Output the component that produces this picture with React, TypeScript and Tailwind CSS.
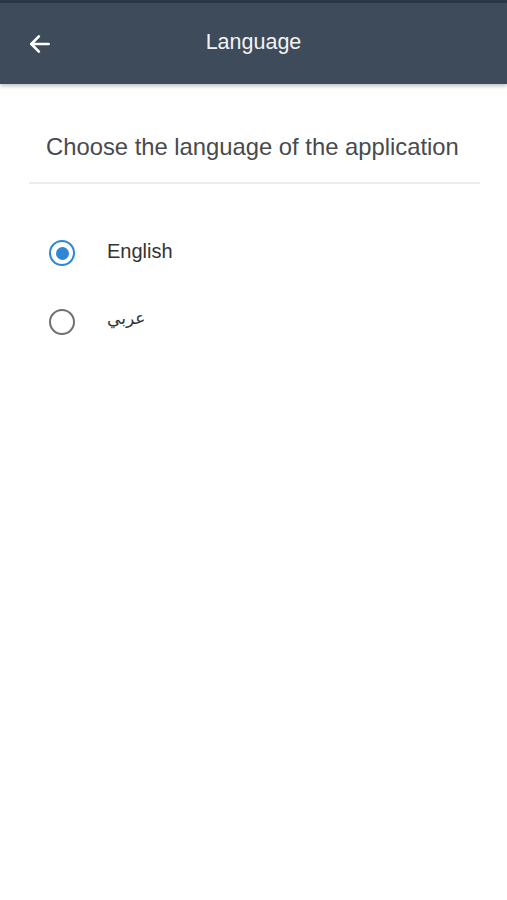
import React from "react";

export default function App() {
  return (
    <div className="min-h-[900px] w-[507px] bg-white" style={{ fontFamily: '"Liberation Sans", Arial, "Noto Sans", sans-serif' }}>
      <div className="h-[3px] bg-[#2c3846]" />
      <header className="relative flex h-[81px] items-center justify-center bg-[#3e4b5a] pb-[2px] shadow-[0_2px_4px_rgba(0,0,0,0.25)]">
        <button className="absolute left-[26px] top-[27px] flex h-[28px] w-[28px] items-center justify-center">
          <svg width="26" height="26" viewBox="0 0 24 24" fill="none" stroke="white" strokeWidth="2.4" strokeLinecap="round" strokeLinejoin="round">
            <path d="M20 12H4" />
            <path d="M11 5l-7 7 7 7" />
          </svg>
        </button>
        <h1 className="text-[21.5px] text-[#f1f3f5]">Language</h1>
      </header>
      <div className="px-[29px]">
        <p className="pt-[49px] pb-[21px] pl-[17px] text-[23.8px] leading-[28px] text-[#474a4e]">
          Choose the language of the application
        </p>
        <div className="h-[2px] w-[451px] bg-[#ececec]" />
        <div className="flex flex-col gap-[43px] pt-[56px] pl-[20px]">
          <div className="flex items-center gap-[32px]">
            <div className="flex h-[26px] w-[26px] items-center justify-center rounded-full border-[2.5px] border-[#2f86d6]">
              <div className="h-[13px] w-[13px] rounded-full bg-[#2f86d6]" />
            </div>
            <span className="-mt-[4px] text-[20px] leading-[24px] text-[#333]">English</span>
          </div>
          <div className="flex items-center gap-[32px]">
            <div className="h-[26px] w-[26px] rounded-full border-[2.5px] border-[#707070]" />
            <span className="-mt-[8px] text-[17px] leading-[24px] text-[#333]" style={{ fontFamily: '"Noto Sans", "DejaVu Sans", sans-serif' }}>عربي</span>
          </div>
        </div>
      </div>
    </div>
  );
}
